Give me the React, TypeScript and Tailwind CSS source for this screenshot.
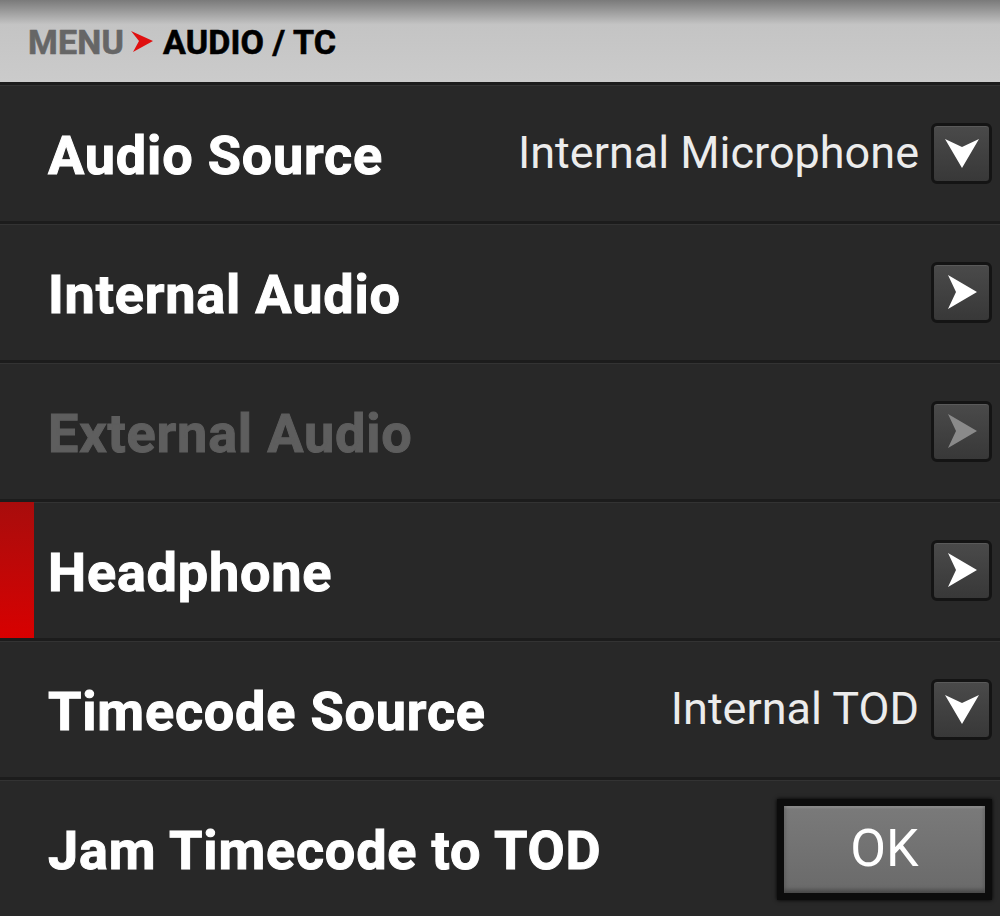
import React from 'react';

type Row = {
  label: string;
  value?: string;
  control: 'down' | 'right' | 'ok';
  disabled?: boolean;
  selected?: boolean;
};

const rows: Row[] = [
  { label: 'Audio Source', value: 'Internal Microphone', control: 'down' },
  { label: 'Internal Audio', control: 'right' },
  { label: 'External Audio', control: 'right', disabled: true },
  { label: 'Headphone', control: 'right', selected: true },
  { label: 'Timecode Source', value: 'Internal TOD', control: 'down' },
  { label: 'Jam Timecode to TOD', control: 'ok' },
];

function ArrowButton({ dir, disabled }: { dir: 'down' | 'right'; disabled?: boolean }) {
  const fill = disabled ? '#8a8a8a' : '#ffffff';
  return (
    <div className="w-[61px] h-[61px] rounded-[6px] border-[3px] border-[#141414] bg-gradient-to-b from-[#4a4a4a] to-[#383838] flex items-center justify-center shadow-[inset_0_1px_0_#5a5a5a]">
      <svg width="40" height="40" viewBox="0 0 40 40">
        {dir === 'down' ? (
          <path d="M3 6 L20 14 L37 6 L20 35 Z" fill={fill} />
        ) : (
          <path d="M6 3 L35 20 L6 37 L14 20 Z" fill={fill} />
        )}
      </svg>
    </div>
  );
}

function App() {
  return (
    <div className="w-[1000px] h-[916px] bg-[#282828] flex flex-col overflow-hidden" style={{ fontFamily: 'Roboto, "Liberation Sans", sans-serif' }}>
      <header className="h-[82px] shrink-0 bg-gradient-to-b from-[#7a7a7a] via-[#c4c4c4] via-30% to-[#cbcbcb] flex items-center pl-[28px] pt-[3px]">
        <span className="text-[34px] font-bold text-[#666666] tracking-[0.2px] [-webkit-text-stroke:0.6px_currentColor]">MENU</span>
        <svg width="26" height="24" viewBox="0 0 26 24" className="ml-[5px] mr-[8px] mt-[-2px]">
          <path d="M2 1 L24 11 L4 22 L10 11 Z" fill="#e01010" />
        </svg>
        <span className="text-[34px] font-bold text-black tracking-[0.1px] [-webkit-text-stroke:0.6px_currentColor]">AUDIO / TC</span>
      </header>
      <div className="flex-1 flex flex-col">
        {rows.map((row) => (
          <div
            key={row.label}
            className="flex-1 relative flex items-center pl-[48px] pr-[8px] border-t-[3px] border-t-[#1c1c1c] shadow-[inset_0_1px_0_#333333]"
          >
            {row.selected && (
              <div className="absolute left-0 top-0 bottom-0 w-[34px] bg-gradient-to-b from-[#a80c0c] to-[#d80000]" />
            )}
            <span
              className={`text-[54px] font-bold tracking-[0.8px] mt-[4px] [-webkit-text-stroke:1px_currentColor] ${row.disabled ? 'text-[#5e5e5e]' : 'text-white'}`}
            >
              {row.label}
            </span>
            <div className="ml-auto flex items-center">
              {row.value && (
                <span className="text-[45px] text-[#ececec] mr-[12px]">{row.value}</span>
              )}
              {row.control === 'ok' ? (
                <div className="w-[215px] h-[101px] bg-[#0c0c0c] p-[7px] mt-[2px] shadow-[0_0_4px_#000]">
                  <div className="w-full h-full bg-gradient-to-b from-[#7a7a7a] to-[#6a6a6a] flex items-center justify-center shadow-[inset_0_-3px_4px_rgba(0,0,0,0.35),inset_0_2px_2px_rgba(255,255,255,0.15)]">
                    <span className="text-[52px] text-white">OK</span>
                  </div>
                </div>
              ) : (
                <ArrowButton dir={row.control} disabled={row.disabled} />
              )}
            </div>
          </div>
        ))}
      </div>
    </div>
  );
}

export default App;
